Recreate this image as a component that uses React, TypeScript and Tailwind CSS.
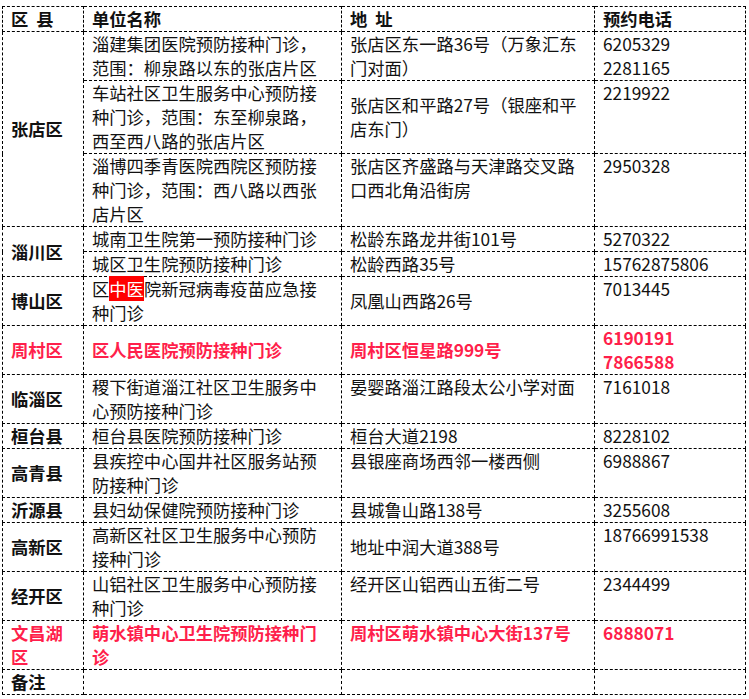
import React from 'react';

type Row = {
  area?: string;
  span?: number;
  name: React.ReactNode;
  addr: string;
  tel: React.ReactNode;
  red?: boolean;
  nameV?: 'top' | 'mid';
  addrV?: 'top' | 'mid';
};

const hl = (
  <>
    区<span className="bg-[#ff0000] text-white">中医</span>院新冠病毒疫苗应急接种门诊
  </>
);

const rows: Row[] = [
  { area: '张店区', span: 3, name: '淄建集团医院预防接种门诊，范围：柳泉路以东的张店片区', addr: '张店区东一路36号（万象汇东门对面）', tel: <>6205329<br />2281165</> },
  { name: '车站社区卫生服务中心预防接种门诊，范围：东至柳泉路，西至西八路的张店片区', addr: '张店区和平路27号（银座和平店东门）', tel: '2219922', addrV: 'mid' },
  { name: '淄博四季青医院西院区预防接种门诊，范围：西八路以西张店片区', addr: '张店区齐盛路与天津路交叉路口西北角沿街房', tel: '2950328' },
  { area: '淄川区', span: 2, name: '城南卫生院第一预防接种门诊', addr: '松龄东路龙井街101号', tel: '5270322' },
  { name: '城区卫生院预防接种门诊', addr: '松龄西路35号', tel: '15762875806' },
  { area: '博山区', name: hl, addr: '凤凰山西路26号', tel: '7013445', addrV: 'mid' },
  { area: '周村区', name: '区人民医院预防接种门诊', addr: '周村区恒星路999号', tel: <>6190191<br />7866588</>, red: true, nameV: 'mid', addrV: 'mid' },
  { area: '临淄区', name: '稷下街道淄江社区卫生服务中心预防接种门诊', addr: '晏婴路淄江路段太公小学对面', tel: '7161018' },
  { area: '桓台县', name: '桓台县医院预防接种门诊', addr: '桓台大道2198', tel: '8228102' },
  { area: '高青县', name: '县疾控中心国井社区服务站预防接种门诊', addr: '县银座商场西邻一楼西侧', tel: '6988867' },
  { area: '沂源县', name: '县妇幼保健院预防接种门诊', addr: '县城鲁山路138号', tel: '3255608' },
  { area: '高新区', name: '高新区社区卫生服务中心预防接种门诊', addr: '地址中润大道388号', tel: '18766991538', addrV: 'mid' },
  { area: '经开区', name: '山铝社区卫生服务中心预防接种门诊', addr: '经开区山铝西山五街二号', tel: '2344499' },
  { area: '文昌湖区', name: '萌水镇中心卫生院预防接种门诊', addr: '周村区萌水镇中心大街137号', tel: '6888071', red: true },
];

const cell = 'border border-dashed border-black px-2 py-0';

export default function App() {
  return (
    <div className="bg-white w-[749px] h-[699px] pt-[6px] pl-[2px] font-['Microsoft_YaHei','Noto_Sans_CJK_SC',sans-serif] text-[17.3px] leading-[24px] text-[#111]">
      <table className="table-fixed border-collapse w-[743px]">
        <colgroup>
          <col className="w-[81px]" />
          <col className="w-[258px]" />
          <col className="w-[253px]" />
          <col className="w-[151px]" />
        </colgroup>
        <thead>
          <tr className="font-bold text-left">
            <th className={cell}>区&nbsp;&nbsp;县</th>
            <th className={cell}>单位名称</th>
            <th className={cell}>地&nbsp;&nbsp;址</th>
            <th className={cell}>预约电话</th>
          </tr>
        </thead>
        <tbody>
          {rows.map((r, i) => {
            const c = r.red ? 'text-[#ff1f4b] font-bold' : '';
            return (
              <tr key={i}>
                {r.area && (
                  <td rowSpan={r.span || 1} className={`${cell} align-middle font-bold ${r.red ? 'text-[#ff1f4b]' : ''}`}>
                    {r.area}
                  </td>
                )}
                <td className={`${cell} pr-[22px] ${r.nameV === 'mid' ? 'align-middle' : 'align-top'} ${c}`}>{r.name}</td>
                <td className={`${cell} ${r.addrV === 'mid' ? 'align-middle' : 'align-top'} ${c}`}>{r.addr}</td>
                <td className={`${cell} align-top ${c}`}>{r.tel}</td>
              </tr>
            );
          })}
          <tr>
            <td className={`${cell} font-bold`}>备注</td>
            <td className={cell}></td>
            <td className={cell}></td>
            <td className={cell}></td>
          </tr>
        </tbody>
      </table>
    </div>
  );
}
